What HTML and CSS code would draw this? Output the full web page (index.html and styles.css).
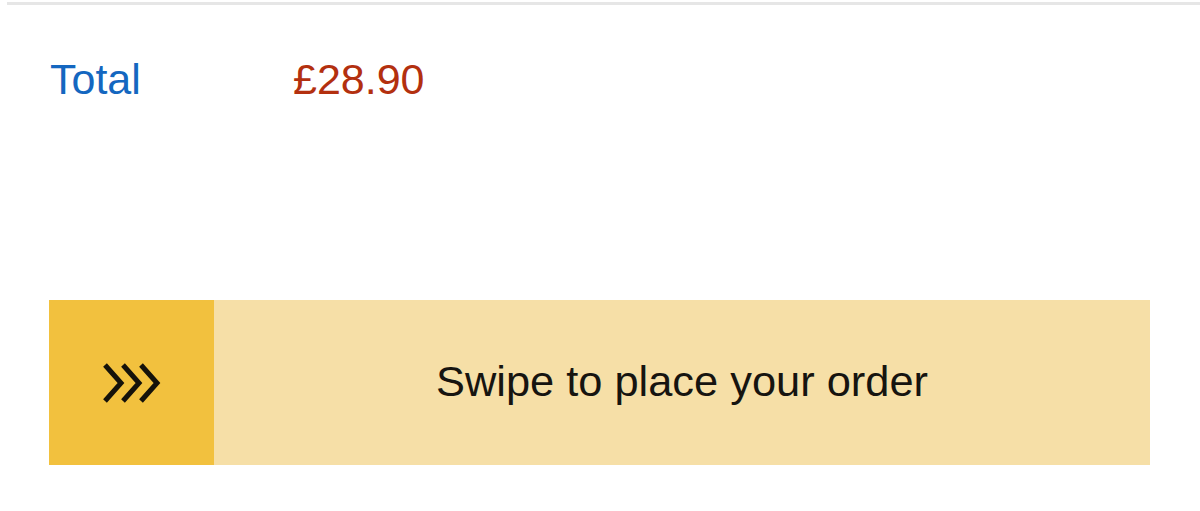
FILE: index.html
```html
<!DOCTYPE html>
<html lang="en">
<head>
<meta charset="utf-8">
<title>Checkout</title>
<link rel="stylesheet" href="styles.css">
</head>
<body>
<div class="page">
  <div class="rule"></div>
  <div class="total-row">
    <span class="total-label">Total</span>
    <span class="total-value">£28.90</span>
  </div>
  <div class="swipe">
    <div class="swipe-handle">
      <svg class="chevrons" width="60" height="40" viewBox="0 0 60 40" aria-hidden="true">
        <polyline points="3,2 19,20 3,38" />
        <polyline points="21,2 37,20 21,38" />
        <polyline points="39,2 55,20 39,38" />
      </svg>
    </div>
    <div class="swipe-track">Swipe to place your order</div>
  </div>
</div>
</body>
</html>
```
FILE: styles.css
```css
html, body {
  margin: 0;
  padding: 0;
  background: #ffffff;
}
body {
  font-family: "Liberation Sans", Arial, sans-serif;
  width: 1200px;
  height: 511px;
  overflow: hidden;
}
.page {
  padding: 2px 50px 0 49px;
}
.rule {
  height: 3px;
  margin-left: -42px;
  margin-right: -50px;
  background: #e6e6e6;
}
.total-row {
  display: flex;
  margin-top: 50px;
  font-size: 43px;
  line-height: 1.15;
}
.total-label {
  width: 243px;
  padding-left: 1px;
  color: #1467c0;
}
.total-value {
  color: #b3300f;
}
.swipe {
  display: flex;
  height: 165px;
  margin-top: 196px;
}
.swipe-handle {
  width: 165px;
  flex: none;
  background: #f2c13e;
  display: flex;
  align-items: center;
  justify-content: center;
}
.chevrons polyline {
  fill: none;
  stroke: #15120a;
  stroke-width: 5;
}
.swipe-track {
  flex: 1;
  background: #f6dfa7;
  display: flex;
  align-items: center;
  justify-content: center;
  font-size: 43.4px;
  color: #161410;
  padding-bottom: 2px;
}
```
